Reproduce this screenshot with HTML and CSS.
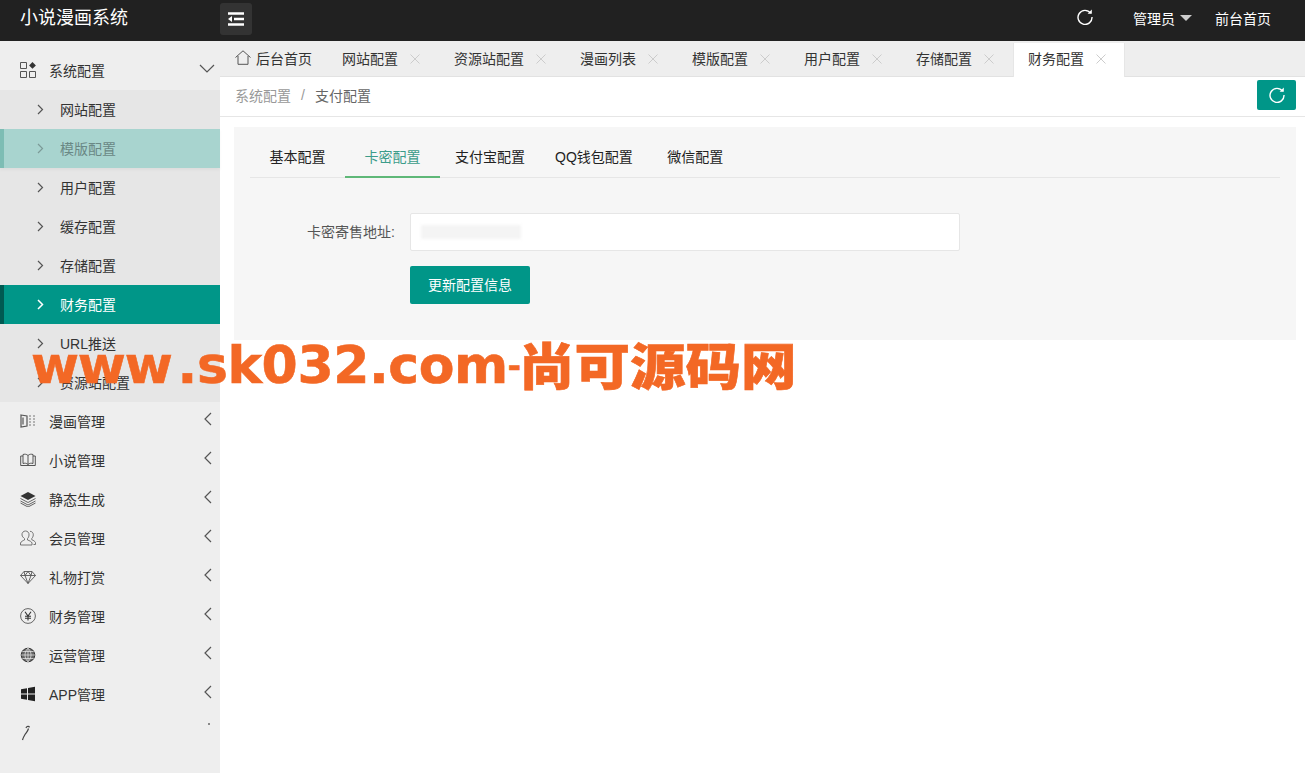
FILE: index.html
```html
<!DOCTYPE html>
<html>
<head>
    <title>小说漫画系统</title>
    <link rel="stylesheet" href="styles.css">
</head>
<body>
    <header class="topbar">
        <div class="logo">小说漫画系统</div>
        <button class="toggle">
            <svg width="16" height="14" viewBox="0 0 16 14"><path d="M0 1.500h16M6 7h10M0 12.500h16" stroke="#fff" stroke-width="2.400" fill="none"/><path d="M0 7l4-3v6z" fill="#fff"/></svg>
        </button>
        <div class="top-right">
            <svg class="top-refresh" width="16" height="16" viewBox="0 0 16 16"><path d="M13.600 4.200A7 7 0 1 0 15 8" stroke="#fff" stroke-width="1.400" fill="none"/><path d="M10.600 4.800h4.200V.6z" fill="#fff"/></svg>
            <a class="top-link">管理员<span class="caret"></span></a>
            <a class="top-link">前台首页</a>
        </div>
    </header>

    <div class="layout">
        <aside class="sidebar">
            <div class="menu-item">
                <svg class="menu-icon" viewBox="0 0 16 16"><path d="M.5.5h6v6h-6zM.5 9.500h6v6h-6zM9.500 9.500h6v6h-6z" fill="none" stroke="#555"/><path d="M12.500 0l3.400 3.400-3.400 3.400-3.400-3.400z" fill="#333"/></svg>
                <span>系统配置</span>
                <svg class="chevron chevron-down" viewBox="0 0 16 9"><path d="M1 1l7 7 7-7" fill="none" stroke="#555" stroke-width="1.200"/></svg>
            </div>
            <div class="submenu">
                <div class="sub-item"><svg class="arrow" viewBox="0 0 7 11"><path d="M1 1l4.500 4.500L1 10" fill="none" stroke="#555" stroke-width="1.200"/></svg>网站配置</div>
                <div class="sub-item hover"><svg class="arrow" viewBox="0 0 7 11"><path d="M1 1l4.500 4.500L1 10" fill="none" stroke="#7c9a97" stroke-width="1.200"/></svg>模版配置</div>
                <div class="sub-item"><svg class="arrow" viewBox="0 0 7 11"><path d="M1 1l4.500 4.500L1 10" fill="none" stroke="#555" stroke-width="1.200"/></svg>用户配置</div>
                <div class="sub-item"><svg class="arrow" viewBox="0 0 7 11"><path d="M1 1l4.500 4.500L1 10" fill="none" stroke="#555" stroke-width="1.200"/></svg>缓存配置</div>
                <div class="sub-item"><svg class="arrow" viewBox="0 0 7 11"><path d="M1 1l4.500 4.500L1 10" fill="none" stroke="#555" stroke-width="1.200"/></svg>存储配置</div>
                <div class="sub-item active"><svg class="arrow" viewBox="0 0 7 11"><path d="M1 1l4.500 4.500L1 10" fill="none" stroke="#fff" stroke-width="1.500"/></svg>财务配置</div>
                <div class="sub-item"><svg class="arrow" viewBox="0 0 7 11"><path d="M1 1l4.500 4.500L1 10" fill="none" stroke="#555" stroke-width="1.200"/></svg>URL推送</div>
                <div class="sub-item"><svg class="arrow" viewBox="0 0 7 11"><path d="M1 1l4.500 4.500L1 10" fill="none" stroke="#555" stroke-width="1.200"/></svg>资源站配置</div>
            </div>
            <div class="menu-item">
                <svg class="menu-icon" viewBox="0 0 16 16"><path d="M1 2l6 1v10l-6 1zM3 4.500v7" fill="none" stroke="#555" stroke-width="1.200"/><path d="M9 3h2M13 3h2M9 6h2M13 6h2M9 9h2M13 9h2M9 12h2M13 12h2" stroke="#777"/></svg>
                <span>漫画管理</span>
                <svg class="chevron" viewBox="0 0 8 14"><path d="M7 1L1 7l6 6" fill="none" stroke="#555" stroke-width="1.200"/></svg>
            </div>
            <div class="menu-item">
                <svg class="menu-icon" viewBox="0 0 16 16"><path d="M8 3.500C6.500 2 4.500 2 3 2.500v9c1.500-.5 3.500-.5 5 1 1.500-1.500 3.500-1.500 5-1v-9C11.500 2 9.500 2 8 3.500zM8 3.500v9M3 4H.7v9.500h14.600V4H13" fill="none" stroke="#555"/></svg>
                <span>小说管理</span>
                <svg class="chevron" viewBox="0 0 8 14"><path d="M7 1L1 7l6 6" fill="none" stroke="#555" stroke-width="1.200"/></svg>
            </div>
            <div class="menu-item">
                <svg class="menu-icon" viewBox="0 0 16 16"><path d="M8 1l7.500 4L8 9 .5 5z" fill="#333"/><path d="M.5 7.500L8 11.500l7.500-4M.5 10L8 14l7.500-4M.5 12L8 16l7.500-4" fill="none" stroke="#555" stroke-width=".9"/></svg>
                <span>静态生成</span>
                <svg class="chevron" viewBox="0 0 8 14"><path d="M7 1L1 7l6 6" fill="none" stroke="#555" stroke-width="1.200"/></svg>
            </div>
            <div class="menu-item">
                <svg class="menu-icon" viewBox="0 0 16 16"><path d="M5.500 1a3.500 3.500 0 0 1 3.500 4c0 1.500-.8 3-1.500 3.600v1.400c2 .7 4 1.500 4.500 3v2H.5v-2c.5-1.500 2.500-2.300 4-3V8.600C3.800 8 2 6.500 2 5a3.500 3.500 0 0 1 3.500-4zM10 1.300c2 0 3.300 1.500 3.300 3.500 0 1.500-.8 3-1.500 3.500v1.500c1.500.5 3 1.300 3.700 2.700v2h-2" fill="none" stroke="#666" stroke-width=".9"/></svg>
                <span>会员管理</span>
                <svg class="chevron" viewBox="0 0 8 14"><path d="M7 1L1 7l6 6" fill="none" stroke="#555" stroke-width="1.200"/></svg>
            </div>
            <div class="menu-item">
                <svg class="menu-icon" viewBox="0 0 16 16"><path d="M4 2.500h8l3.500 4L8 14.500.5 6.500zM.5 6.500h15M5 6.500L8 14.500l3-8M4 2.500l1 4 3-4 3 4 1-4" fill="none" stroke="#555" stroke-width=".9"/></svg>
                <span>礼物打赏</span>
                <svg class="chevron" viewBox="0 0 8 14"><path d="M7 1L1 7l6 6" fill="none" stroke="#555" stroke-width="1.200"/></svg>
            </div>
            <div class="menu-item">
                <svg class="menu-icon" viewBox="0 0 16 16"><circle cx="8" cy="8" r="7.400" fill="none" stroke="#555" stroke-width=".9"/><path d="M5 3.800L8 8l3-4.200M8 8v4.500M5 8.200h6M5 10.200h6" fill="none" stroke="#333" stroke-width="1.100"/></svg>
                <span>财务管理</span>
                <svg class="chevron" viewBox="0 0 8 14"><path d="M7 1L1 7l6 6" fill="none" stroke="#555" stroke-width="1.200"/></svg>
            </div>
            <div class="menu-item">
                <svg class="menu-icon" viewBox="0 0 16 16"><circle cx="8" cy="8" r="6.800" fill="#666" stroke="#333"/><path d="M8 1.200v13.600M1.200 8h13.600M2.300 4.500h11.400M2.300 11.500h11.400M8 1.200c-4 3.500-4 10 0 13.600M8 1.200c4 3.500 4 10 0 13.600" fill="none" stroke="#eee" stroke-width=".7"/></svg>
                <span>运营管理</span>
                <svg class="chevron" viewBox="0 0 8 14"><path d="M7 1L1 7l6 6" fill="none" stroke="#555" stroke-width="1.200"/></svg>
            </div>
            <div class="menu-item">
                <svg class="menu-icon" viewBox="0 0 16 16"><path d="M1 3.200l6-1v5.300H1zM8 2l7-1.200v6.700H8zM1 8.500h6v5.300l-6-1zM8 8.500h7v6.700L8 14z" fill="#222"/></svg>
                <span>APP管理</span>
                <svg class="chevron" viewBox="0 0 8 14"><path d="M7 1L1 7l6 6" fill="none" stroke="#555" stroke-width="1.200"/></svg>
            </div>
            <div class="menu-item">
                <svg class="menu-icon" viewBox="0 0 16 16"><path d="M6 3c.5-1.800 3-2.200 3.500-.6M8.500 3.500C7.500 7 6.500 7 5 9.500S3 13 2.500 15" fill="none" stroke="#444" stroke-width="1.200"/></svg>
                <span class="menu-dot"></span>
            </div>
        </aside>

        <main class="main">
            <div class="tabs">
                <div class="tab">
                    <svg class="home" viewBox="0 0 16 15"><path d="M.5 7.500L8 .8l7.500 6.700M3 6v8.300h10V6" fill="none" stroke="#555"/></svg>
                    <span>后台首页</span>
                </div>
                <div class="tab">网站配置<svg class="close" viewBox="0 0 10 10"><path d="M.5.500l9 9M9.500.500l-9 9" stroke="#ccc"/></svg></div>
                <div class="tab">资源站配置<svg class="close" viewBox="0 0 10 10"><path d="M.5.500l9 9M9.500.500l-9 9" stroke="#ccc"/></svg></div>
                <div class="tab">漫画列表<svg class="close" viewBox="0 0 10 10"><path d="M.5.500l9 9M9.500.500l-9 9" stroke="#ccc"/></svg></div>
                <div class="tab">模版配置<svg class="close" viewBox="0 0 10 10"><path d="M.5.500l9 9M9.500.500l-9 9" stroke="#ccc"/></svg></div>
                <div class="tab">用户配置<svg class="close" viewBox="0 0 10 10"><path d="M.5.500l9 9M9.500.500l-9 9" stroke="#ccc"/></svg></div>
                <div class="tab">存储配置<svg class="close" viewBox="0 0 10 10"><path d="M.5.500l9 9M9.500.500l-9 9" stroke="#ccc"/></svg></div>
                <div class="tab current">财务配置<svg class="close" viewBox="0 0 10 10"><path d="M.5.500l9 9M9.500.500l-9 9" stroke="#ccc"/></svg></div>
            </div>

            <div class="breadcrumb">
                <span class="crumb">系统配置</span>
                <span class="crumb-sep">/</span>
                <span class="crumb-now">支付配置</span>
                <button class="refresh-btn">
                    <svg width="16" height="16" viewBox="0 0 16 16"><path d="M13.600 4.200A7 7 0 1 0 15 8" stroke="#fff" stroke-width="1.400" fill="none"/><path d="M10.600 4.800h4.200V.6z" fill="#fff"/></svg>
                </button>
            </div>

            <div class="panel">
                <ul class="pay-tabs">
                    <li>基本配置</li>
                    <li class="this">卡密配置</li>
                    <li>支付宝配置</li>
                    <li>QQ钱包配置</li>
                    <li>微信配置</li>
                </ul>
                <div class="form-row">
                    <label class="form-label">卡密寄售地址:</label>
                    <div class="form-input"><span class="redacted"></span></div>
                </div>
                <div class="form-row">
                    <button class="save-btn">更新配置信息</button>
                </div>
            </div>
        </main>
    </div>

    <div class="watermark"><span class="wm-www">www</span>.sk032.com<span class="wm-dash">-</span><span class="wm-cn">尚可源码网</span></div>
</body>
</html>
```

FILE: styles.css
```css
* {
    box-sizing: border-box;
}
html, body {
    height: 100%;
}
body {
    margin: 0;
    padding: 0;
    overflow: hidden;
    position: relative;
    font-family: "Liberation Sans", "Noto Sans CJK SC", sans-serif;
    font-size: 14px;
    color: #333;
    background-color: #fff;
}

/* top bar */
.topbar {
    display: flex;
    align-items: center;
    height: 41px;
    padding-right: 34px;
    background-color: #212121;
    color: #fff;
}
.logo {
    width: 220px;
    padding-left: 20px;
    font-size: 18px;
    margin-top: -9px;
}
.toggle {
    display: flex;
    align-items: center;
    justify-content: center;
    width: 32px;
    height: 32px;
    margin-top: -3px;
    padding: 0;
    border: none;
    border-radius: 3px;
    background-color: #333;
}
.top-right {
    display: flex;
    align-items: center;
    margin-left: auto;
}
.top-refresh {
    margin-right: 40px;
    margin-top: -7px;
}
.top-link {
    color: #fff;
    margin-top: -5px;
}
.caret {
    display: inline-block;
    width: 0;
    height: 0;
    margin-left: 5px;
    margin-right: 23px;
    vertical-align: 3px;
    border-left: 6px solid transparent;
    border-right: 6px solid transparent;
    border-top: 6px solid #ccc;
}

.layout {
    display: flex;
    height: 732px;
}

/* sidebar */
.sidebar {
    flex: none;
    width: 220px;
    padding-top: 10px;
    background-color: #eee;
}
.menu-item {
    display: flex;
    align-items: center;
    position: relative;
    height: 39px;
    padding: 0 0 2px 20px;
}
.menu-icon {
    flex: none;
    width: 16px;
    height: 16px;
    margin-right: 13px;
}
.chevron {
    position: absolute;
    right: 8px;
    top: 10px;
    width: 8px;
    height: 14px;
}
.chevron-down {
    right: 5px;
    top: 13px;
    width: 16px;
    height: 9px;
}
.menu-dot {
    position: absolute;
    left: 208px;
    top: 9px;
    width: 2px;
    height: 2px;
    background-color: #888;
}
.submenu {
    background-color: #e6e6e6;
}
.sub-item {
    display: flex;
    align-items: center;
    height: 39px;
    padding: 0 0 2px 33px;
    border-left: 4px solid transparent;
}
.arrow {
    flex: none;
    width: 7px;
    height: 11px;
    margin: 2px 16px 0 0;
}
.sub-item.hover {
    background-color: #a8d4cf;
    border-left-color: #7dbdb4;
    color: #6a8885;
    box-shadow: 0 2px 3px rgba(0, 0, 0, 0.04);
}
.sub-item.active {
    background-color: #009688;
    border-left-color: #005a52;
    color: #fff;
}

/* open tabs */
.main {
    flex: 1;
    min-width: 0;
}
.tabs {
    display: flex;
    height: 36px;
    background-color: #eee;
    border-bottom: 1px solid #e2e2e2;
}
.tab {
    display: flex;
    align-items: center;
    height: 36px;
    padding: 0 19px 2px 15px;
}
.tab:first-child {
    padding-right: 15px;
}
.home {
    width: 16px;
    height: 15px;
    margin-right: 5px;
    margin-top: -2px;
}
.close {
    width: 10px;
    height: 10px;
    margin-left: 12px;
    margin-top: 2px;
}
.tab.current {
    height: 34px;
    margin-top: 2px;
    background-color: #fff;
    border-left: 1px solid #e6e6e6;
    border-right: 1px solid #e6e6e6;
    padding: 0 18px 4px 14px;
}

/* breadcrumb */
.breadcrumb {
    display: flex;
    align-items: center;
    position: relative;
    height: 40px;
    padding: 0 0 4px 15px;
    border-bottom: 1px solid #e6e6e6;
}
.crumb {
    color: #999;
}
.crumb-sep {
    margin: 0 10px;
    color: #999;
}
.crumb-now {
    color: #666;
}
.refresh-btn {
    display: flex;
    align-items: center;
    justify-content: center;
    position: absolute;
    right: 9px;
    top: 3px;
    width: 39px;
    height: 30px;
    padding: 0;
    border: none;
    border-radius: 2px;
    background-color: #009688;
}

/* payment panel */
.panel {
    width: 1062px;
    height: 213px;
    margin: 10px 0 0 14px;
    padding: 10px 16px 0;
    background-color: #f6f6f6;
}
.pay-tabs {
    display: flex;
    height: 41px;
    margin: 0;
    padding: 0;
    list-style: none;
    border-bottom: 1px solid #e6e6e6;
}
.pay-tabs li {
    min-width: 95px;
    height: 41px;
    padding: 0 15px;
    line-height: 40px;
    text-align: center;
    color: #222;
}
.pay-tabs li.this {
    color: #3c9c8a;
    border-bottom: 2px solid #5fb878;
}
.form-row {
    display: flex;
    align-items: center;
    margin-left: 160px;
    position: relative;
}
.pay-tabs + .form-row {
    margin-top: 35px;
    margin-bottom: 15px;
}
.form-label {
    position: absolute;
    right: 100%;
    margin-right: 15px;
    margin-top: -2px;
    white-space: nowrap;
    color: #555;
}
.form-input {
    display: flex;
    align-items: center;
    width: 550px;
    height: 38px;
    padding-left: 10px;
    background-color: #fff;
    border: 1px solid #e6e6e6;
    border-radius: 2px;
}
.redacted {
    width: 100px;
    height: 14px;
    background-color: #f4f4f4;
    filter: blur(1.5px);
}
.save-btn {
    width: 120px;
    height: 38px;
    padding: 0 0 2px;
    border: none;
    border-radius: 2px;
    background-color: #009688;
    color: #fff;
    font: inherit;
}

/* site watermark laid over the page */
.watermark {
    position: absolute;
    left: 31px;
    top: 330px;
    font-family: "DejaVu Sans", sans-serif;
    font-weight: bold;
    font-size: 52px;
    letter-spacing: -0.4px;
    line-height: 62px;
    white-space: nowrap;
    color: #f36825;
    -webkit-text-stroke: 0.6px #f36825;
}
.wm-www {
    letter-spacing: -1.2px;
    margin-right: 6px;
}
.wm-dash {
    font-size: 32px;
    vertical-align: 6px;
}
.wm-cn {
    display: inline-block;
    margin-left: -2px;
    font-family: "Noto Sans CJK SC", sans-serif;
    font-weight: 900;
    font-size: 50px;
    letter-spacing: 0;
    line-height: 62px;
    transform: translateY(2px) scaleX(1.11);
    transform-origin: left center;
}
```
